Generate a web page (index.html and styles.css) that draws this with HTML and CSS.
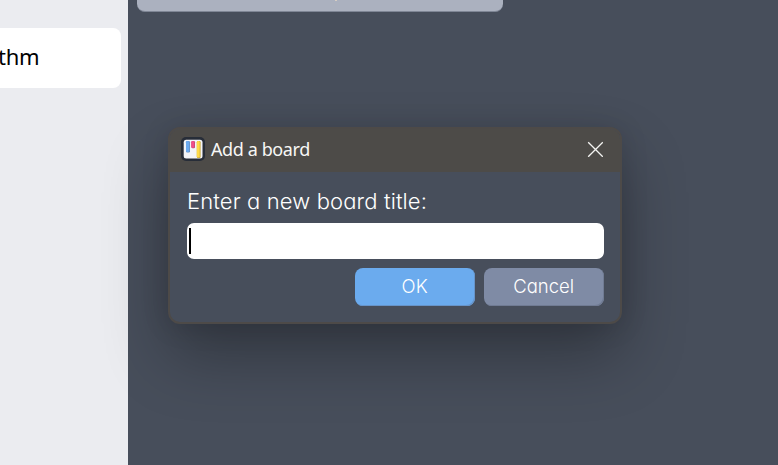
FILE: index.html
```html
<!DOCTYPE html>
<html lang="en">
<head>
<meta charset="utf-8">
<title>Add a board</title>
<link rel="stylesheet" href="styles.css">
</head>
<body>
<div class="app">
  <aside class="sidebar"><div class="board-item"><span>thm</span></div></aside>
  <main class="workspace"><div class="card"><i class="fleck"></i></div></main>
</div>
<section class="dialog" role="dialog" aria-label="Add a board">
  <header class="titlebar">
    <svg class="logo" width="24" height="24" viewBox="0 0 24 24">
      <rect x="0" y="0" width="24" height="24" rx="5" fill="#272d38"/>
      <rect x="2.7" y="2.7" width="18.8" height="18.8" rx="2.5" fill="#f3f4f8"/>
      <rect x="5" y="4" width="4" height="11.5" rx="1.3" fill="#6793c8"/>
      <rect x="5" y="4" width="3.2" height="11" rx="1.3" fill="#6baaf0"/>
      <rect x="10.3" y="4" width="3.7" height="7.3" rx="1.3" fill="#bd4877"/>
      <rect x="10.3" y="4" width="3" height="6.8" rx="1.3" fill="#f14d88"/>
      <rect x="15.8" y="4" width="3.8" height="17" rx="1.3" fill="#c6a536"/>
      <rect x="15.8" y="4" width="2.9" height="16.5" rx="1.3" fill="#ffda4a"/>
    </svg>
    <h1 class="title">Add a board</h1>
    <svg class="close" width="16" height="16" viewBox="0 0 16 16"><path d="M1.2 1.2 15.8 15.8M15.8 1.2 1.2 15.8" fill="none" stroke="#f4f4f2" stroke-width="1.3"/></svg>
  </header>
  <div class="content">
    <div class="label"><span>Enter a new board title:</span></div>
    <div class="field"><i class="caret"></i></div>
    <div class="actions">
      <button class="btn ok"><span>OK</span></button>
      <button class="btn cancel"><span>Cancel</span></button>
    </div>
  </div>
</section>
</body>
</html>
```

FILE: styles.css
```css
* { box-sizing: border-box; }
body { margin: 0; width: 778px; height: 465px; overflow: hidden; font-family: Inter, "Liberation Sans", sans-serif; }
.app { display: flex; height: 465px; }
.sidebar { width: 128px; background: #ebecf0; padding-top: 28px; }
.board-item { width: 120.5px; height: 60px; background: #fff; border-radius: 0 8px 8px 0; display: flex; align-items: center; padding-bottom: 4px; font: 22px/30px "Noto Sans", sans-serif; color: #000; }
.board-item span { margin-left: -2px; letter-spacing: -0.3px; }
.workspace { flex: 1; background: #474e5b; padding-left: 9px; }
.card { width: 366px; height: 12px; background: #abb1bf; border-bottom: 1px solid #7f8695; border-radius: 0 0 8px 8px; }
.fleck { display: block; width: 2px; height: 1px; margin-left: 198px; background: #d6cdc3; }
.dialog { position: absolute; left: 168px; top: 127px; width: 454px; height: 197px; border: 2px solid #4d4a48; border-radius: 12px; background: #474e5b; overflow: hidden; box-shadow: 0 32px 64px rgba(0,0,0,.3), 0 2px 28px rgba(0,0,0,.12); }
.titlebar { height: 43px; background: #4d4b48; display: flex; align-items: center; padding: 0 17px 3px 11px; }
.title { margin: 0 auto 0 6px; font: 400 18px/24px "Noto Sans", sans-serif; color: #f7f7f5; letter-spacing: -0.4px; }
.content { padding: 15px 16.4px 0 17px; }
.label { height: 36px; font-size: 22px; line-height: 29px; font-weight: 350; letter-spacing: .13px; color: #fff; font-feature-settings: "cv11"; white-space: nowrap; }
.field { height: 36px; background: #fff; border-radius: 7px; padding: 5px 2px; display: flex; }
.caret { width: 2px; height: 26px; background: #000; }
.actions { display: flex; justify-content: flex-end; gap: 9px; margin-top: 9px; }
.btn { width: 120px; height: 38px; border: 0; border-radius: 8px; padding: 0 0 2px; font: 350 18.5px/24px Inter, sans-serif; color: #fff; font-feature-settings: "cv11"; }
.ok { background: #6babee; box-shadow: inset -1px -1px #6794c9; }
.cancel { background: #7f8ba5; box-shadow: inset -1px -1px #707b93; }
```
